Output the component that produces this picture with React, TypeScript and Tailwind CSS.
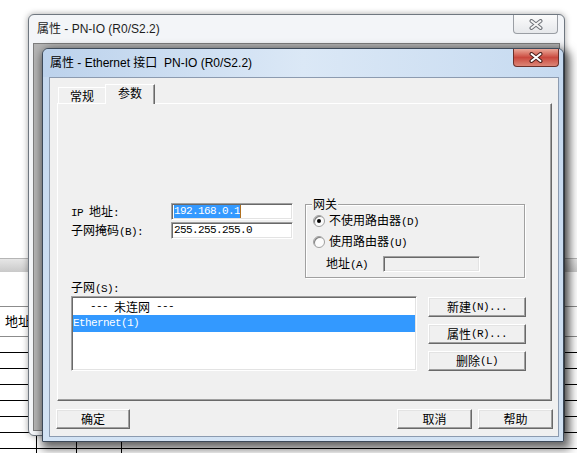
import React from 'react';

const uiFont = "font-['Liberation_Sans','Noto_Sans_CJK_SC',sans-serif]";
const songFont = "font-['Noto_Sans_CJK_SC',sans-serif]";

// Latin text in the dialog body is half-width (SimSun style)
function M({ children }: { children: React.ReactNode }) {
  return (
    <span className="font-['Liberation_Mono',monospace] text-[11px] tracking-[-0.6px] whitespace-pre">{children}</span>
  );
}

function CloseGlyph({ active = false }: { active?: boolean }) {
  return (
    <svg width="14" height="11" viewBox="0 0 14 11">
      <path d="M2.5 2L11.5 9M11.5 2L2.5 9" stroke={active ? '#4a1f1b' : '#6e7278'} strokeWidth="4" strokeLinecap="round" />
      <path d="M2.5 2L11.5 9M11.5 2L2.5 9" stroke={active ? '#ffffff' : '#f4f4f4'} strokeWidth="2" strokeLinecap="round" />
    </svg>
  );
}

const raised =
  'bg-[#f0f0f0] border border-t-white border-l-white border-r-[#696969] border-b-[#696969] shadow-[inset_-1px_-1px_0_#a0a0a0,inset_1px_1px_0_#e3e3e3]';
const sunken =
  'border border-t-[#a0a0a0] border-l-[#a0a0a0] border-r-white border-b-white shadow-[inset_1px_1px_0_#696969,inset_-1px_-1px_0_#e3e3e3]';

function Btn({ className = '', children }: { className?: string; children: React.ReactNode }) {
  return (
    <div className={`flex items-center justify-center h-[20px] leading-none ${raised} ${className}`}>
      {children}
    </div>
  );
}

function Radio({ checked = false }: { checked?: boolean }) {
  return (
    <div className="w-[12px] h-[12px] rounded-full border border-[#a0a0a0] bg-[#fbfbfb] shadow-[inset_1px_1px_0_#808080] flex items-center justify-center">
      {checked && <div className="w-[4px] h-[4px] rounded-full bg-black" />}
    </div>
  );
}

function Background() {
  const rows = Array.from({ length: 8 });
  return (
    <div className="flex flex-col">
      <div className="h-[258px]" />
      <div className="h-[14px] border-t border-[#b5b5b5] bg-gradient-to-b from-[#e6e6e6] to-[#c9c9c9]" />
      <div className="h-[34px]" />
      <div className={`h-[31px] flex items-center border-y border-[#8c8c8c] pl-[5px] text-[13px] ${uiFont}`}>地址</div>
      {rows.map((_, i) => (
        <div key={i} className="flex h-[16px] border-b border-black">
          <div className="w-[37px] border-r border-black" />
          <div className="w-[40px] border-r border-black" />
          <div className="w-[45px] border-r border-black" />
          <div className="flex-1" />
        </div>
      ))}
    </div>
  );
}

function OuterWindow() {
  return (
    <div className="absolute left-[28px] top-[14px] w-[537px] h-[422px] rounded-[6px] border border-[#6f7780] bg-[#f3f5f8] shadow-[0_0_6px_rgba(0,0,0,0.35)] flex flex-col">
      <div className="flex h-[28px] items-start">
        <div className={`${uiFont} pl-[8px] pt-[6px] text-[12px] leading-[16px] text-[#1e1e1e]`}>属性 - PN-IO (R0/S2.2)</div>
        <div className="ml-auto mr-[6px] w-[45px] h-[19px] rounded-b-[4px] border border-t-0 border-[#9a9ea4] bg-gradient-to-b from-[#fbfbfb] to-[#e6e8eb] flex items-center justify-center">
          <CloseGlyph />
        </div>
      </div>
      <div className="mx-[4px] mb-[4px] flex-1 border border-[#7d7d7d] bg-[#b4b4b4]" />
    </div>
  );
}

function Dialog() {
  return (
    <div className="absolute left-[42px] top-[48px] w-[522px] h-[394px] rounded-t-[6px] border border-[#3d4a5a] bg-gradient-to-b from-[#c3d7ee] to-[#d3e3f4] shadow-[3px_4px_10px_3px_rgba(0,0,0,0.6)] flex flex-col">
      {/* title bar */}
      <div className="flex h-[28px] items-start rounded-t-[6px] bg-gradient-to-r from-[#bcd2ec] via-[#dbe8f6] to-[#c6daf0]">
        <div className={`${uiFont} pl-[7px] pt-[6px] text-[12px] leading-[16px] text-black whitespace-pre`}>
          属性 - Ethernet 接口  PN-IO (R0/S2.2)
        </div>
        <div className="ml-auto mr-[4px] w-[46px] h-[18px] rounded-b-[4px] border border-t-0 border-[#6b302a] bg-gradient-to-b from-[#e9a799] via-[#c9483e] to-[#dc8576] flex items-center justify-center">
          <CloseGlyph active />
        </div>
      </div>

      {/* client area */}
      <div className="ml-[6px] mr-[4px] h-[360px] border border-[#8c9bb0] bg-[#f0f0f0] flex flex-col">
        {/* tabs */}
        <div className="flex items-end h-[19px] ml-[8px] mt-[6px]">
          <div className="h-[16px] w-[47px] border-t border-l border-t-white border-l-white flex items-center justify-center leading-none">
            常规
          </div>
          <div className="relative z-10 h-[20px] -mb-[1px] w-[50px] bg-[#f0f0f0] border-t border-l border-r border-t-white border-l-white border-r-[#696969] shadow-[inset_-1px_0_0_#a0a0a0] flex items-start justify-center pt-[2px] leading-none">
            参数
          </div>
        </div>

        {/* tab panel */}
        <div className="ml-[7px] w-[495px] h-[298px] bg-[#f0f0f0] border border-t-white border-l-white border-r-[#696969] border-b-[#696969] shadow-[inset_-1px_-1px_0_#a0a0a0] pl-[13px] pt-[99px] flex flex-col">
          <div className="flex items-start h-[75px]">
            <div className="grid grid-cols-[100px_122px] gap-y-[2px] items-center">
              <div className="leading-none">
                <M>IP </M>地址<M>:</M>
              </div>
              <div className={`h-[17px] bg-white ${sunken} flex items-center pl-[2px]`}>
                <span className="bg-[#3399ff] text-white h-[13px] flex items-center">
                  <M>192.168.0.1</M>
                </span>
                <span className="w-[1px] h-[13px] bg-[#b07020]" />
              </div>
              <div className="leading-none">
                子网掩码<M>(B):</M>
              </div>
              <div className={`h-[17px] bg-white ${sunken} flex items-center pl-[2px]`}>
                <M>255.255.255.0</M>
              </div>
            </div>

            <div className="relative ml-[12px] mt-[1px] w-[220px] h-[74px] border border-[#a0a0a0] shadow-[inset_1px_1px_0_white,1px_1px_0_white] pl-[7px] pt-[9px] flex flex-col gap-[7px]">
              <span className="absolute left-[6px] -top-[8px] bg-[#f0f0f0] px-[1px] leading-[14px]">网关</span>
              <div className="flex items-center h-[14px] gap-[4px] leading-none">
                <Radio checked />
                <span>
                  不使用路由器<M>(D)</M>
                </span>
              </div>
              <div className="flex items-center h-[14px] gap-[4px] leading-none">
                <Radio />
                <span>
                  使用路由器<M>(U)</M>
                </span>
              </div>
              <div className="flex items-center h-[16px] ml-[13px] leading-none">
                <span className="w-[57px]">
                  地址<M>(A)</M>
                </span>
                <div className={`w-[97px] h-[16px] bg-[#f0f0f0] ${sunken}`} />
              </div>
            </div>
          </div>

          <div className="mt-[3px] h-[12px] leading-[12px]">
            子网<M>(S):</M>
          </div>

          <div className="mt-[3px] flex items-start">
            <div className={`w-[346px] h-[75px] bg-white ${sunken} px-[1px] pt-[1px] flex flex-col`}>
              <div className="h-[17px] flex items-center pl-[17px] leading-none whitespace-pre">
                <M>--- </M>未连网<M> ---</M>
              </div>
              <div className="h-[17px] flex items-center bg-[#3399ff] text-white leading-none">
                <M>Ethernet(1)</M>
              </div>
            </div>
            <div className="ml-[11px] pt-[1px] flex flex-col gap-[7px]">
              <Btn className="w-[98px]">
                新建<M>(N)...</M>
              </Btn>
              <Btn className="w-[98px]">
                属性<M>(R)...</M>
              </Btn>
              <Btn className="w-[98px]">
                删除<M>(L)</M>
              </Btn>
            </div>
          </div>
        </div>

        {/* bottom buttons */}
        <div className="mt-[8px] ml-[6px] flex">
          <Btn className="w-[74px]">确定</Btn>
          <Btn className="w-[75px] ml-auto">取消</Btn>
          <Btn className="w-[75px] ml-[6px] mr-[5px]">帮助</Btn>
        </div>
      </div>
    </div>
  );
}

export default function App() {
  return (
    <div className={`relative w-[577px] h-[453px] overflow-hidden bg-white text-[12px] text-black ${songFont}`}>
      <Background />
      <OuterWindow />
      <Dialog />
    </div>
  );
}
